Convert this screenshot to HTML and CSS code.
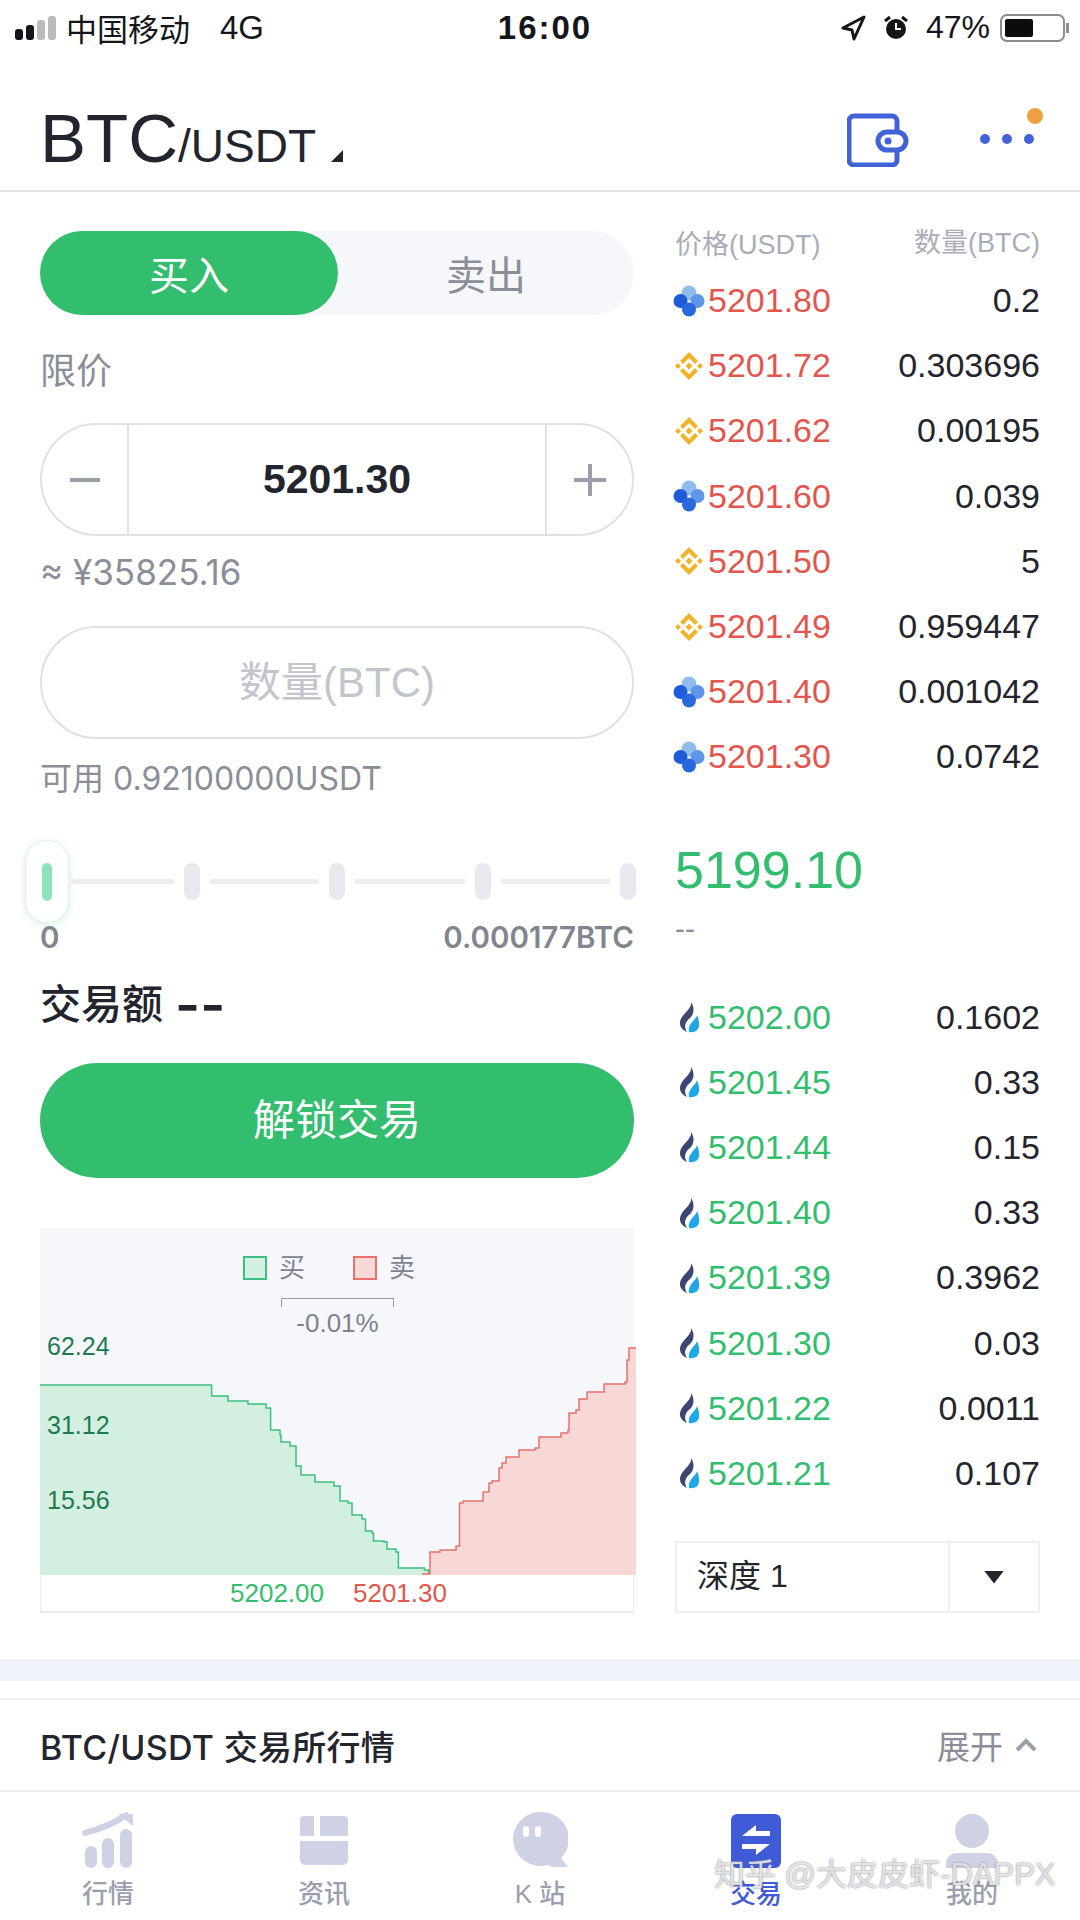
FILE: index.html
```html
<!DOCTYPE html>
<html lang="zh-CN">
<head>
    <meta charset="UTF-8">
    <meta name="viewport" content="width=device-width, initial-scale=1.0">
    <title>BTC/USDT 交易</title>
    <link rel="stylesheet" href="styles.css">
</head>
<body>
    <!-- exchange logos -->
    <svg class="defs" aria-hidden="true">
        <symbol id="ok" viewBox="0 0 32 32">
            <circle cx="16" cy="8" r="7.5" fill="#8fbbee"/>
            <circle cx="7.5" cy="16" r="7" fill="#1f5bd8"/>
            <circle cx="24.5" cy="16" r="7" fill="#5f96e8"/>
            <circle cx="16" cy="24.5" r="7" fill="#2a68de"/>
        </symbol>
        <symbol id="bn" viewBox="0 0 32 32">
            <path fill="#efb429" d="M16 2l9 9-3 3-6-6-6 6-3-3zM16 30l9-9-3-3-6 6-6-6-3 3zM16 12.500l3.500 3.500-3.500 3.500-3.500-3.500zM5 13l3 3-3 3-3-3zM27 13l3 3-3 3-3-3z"/>
        </symbol>
        <symbol id="hb" viewBox="0 0 32 32">
            <g transform="translate(2 1)">
                <path fill="#3c4673" d="M16 0C17 6 10 10 7 15C3 21 5 27 12 30C8 24 11 19 15 16C19 12 20 6 16 0Z"/>
                <path fill="#1ea7e6" d="M22 13C22 17 12 22 14 30C20 31 25 28 24 21C24 18 23 15 22 13Z"/>
            </g>
        </symbol>
    </svg>

    <div class="statusbar">
        <div class="status-left">
            <span class="signal"><i></i><i></i><i class="off"></i><i class="off"></i></span>
            <span class="carrier">中国移动</span>
            <span class="net">4G</span>
        </div>
        <div class="status-time">16:00</div>
        <div class="status-right">
            <svg width="25" height="26" viewBox="0 0 25 26"><path d="M23 2L2 13l9 2 2 9z" fill="none" stroke="#15161a" stroke-width="3" stroke-linejoin="round"/></svg>
            <svg width="26" height="26" viewBox="0 0 26 26"><circle cx="13" cy="14" r="10" fill="#15161a"/><path d="M13 8v6h5" fill="none" stroke="#fff" stroke-width="2"/><path d="M2 6l5-4M24 6l-5-4" stroke="#15161a" stroke-width="3"/></svg>
            <span class="percent">47%</span>
            <span class="battery"><i></i></span>
        </div>
    </div>

    <header class="topbar">
        <div class="pair">
            <span class="pair-base">BTC</span><span class="pair-quote">/USDT</span>
            <span class="pair-caret"></span>
        </div>
        <div class="top-actions">
            <svg width="62" height="54" viewBox="0 0 62 54">
                <path d="M50 19V8a5 5 0 0 0-5-5H7a5 5 0 0 0-5 5v39a5 5 0 0 0 5 5h38a5 5 0 0 0 5-5V37" fill="none" stroke="#4263d8" stroke-width="5"/>
                <rect x="31" y="19" width="28" height="18" rx="9" fill="#fff" stroke="#4263d8" stroke-width="5"/>
                <circle cx="41" cy="28" r="3.500" fill="#4263d8"/>
            </svg>
            <div class="more">
                <i></i><i></i><i></i>
                <span class="more-dot"></span>
            </div>
        </div>
    </header>

    <div class="trade">
        <section class="form">
            <div class="side-tabs">
                <div class="side-tab active">买入</div>
                <div class="side-tab">卖出</div>
            </div>

            <div class="order-type">限价</div>

            <div class="stepper">
                <div class="step-btn">
                    <svg width="32" height="32" viewBox="0 0 32 32"><path d="M1 16h30" stroke="#9a9ea8" stroke-width="4"/></svg>
                </div>
                <div class="step-value">5201.30</div>
                <div class="step-btn">
                    <svg width="34" height="34" viewBox="0 0 34 34"><path d="M1 17h32M17 1v32" stroke="#9a9ea8" stroke-width="4"/></svg>
                </div>
            </div>
            <div class="hint fiat">≈ ¥35825.16</div>

            <div class="amount-input">数量(BTC)</div>
            <div class="hint avail">可用 0.92100000USDT</div>

            <div class="slider">
                <div class="thumb"><i></i></div>
                <span class="line line-first"></span>
                <span class="tick"></span>
                <span class="line"></span>
                <span class="tick"></span>
                <span class="line"></span>
                <span class="tick"></span>
                <span class="line"></span>
                <span class="tick"></span>
            </div>
            <div class="slider-labels">
                <span>0</span>
                <span>0.000177BTC</span>
            </div>

            <div class="volume">交易额 <span class="volume-empty">--</span></div>
            <div class="unlock">解锁交易</div>

            <div class="depth-chart">
                <svg class="depth-svg" width="596" height="347" viewBox="0 0 596 347">
                    <path fill="#d2efe0" stroke="none" d="M0 347V157H171.600V168H188V173H208V176H226V180H230.600V202H240V207H241V214H250V218H256V238H261V247H275V254H294V258H300V273H308V275H312V287H322V291H325.500V303H332V305H333.500V313H344V314H347V321H356V324H358.400V340H384.500V342H388.500V345H410V347Z"/>
                    <path fill="none" stroke="#3cc07c" stroke-width="1.500" d="M0 157H171.600V168H188V173H208V176H226V180H230.600V202H240V207H241V214H250V218H256V238H261V247H275V254H294V258H300V273H308V275H312V287H322V291H325.500V303H332V305H333.500V313H344V314H347V321H356V324H358.400V340H384.500V342H388.500V345H410"/>
                    <path fill="#f8d8d7" stroke="none" d="M382 347V346H390V324H400V322H416V318H419.500V275H423V273H443V264H449V255H452V253H459V240H462V235H466V229H479V222H495V220H499V209H521V205H528V202H529V185H536V182H539V171H547V164H564V156H585V154H587V132H589V120H596V347Z"/>
                    <path fill="none" stroke="#e8716c" stroke-width="1.500" d="M382 346H390V324H400V322H416V318H419.500V275H423V273H443V264H449V255H452V253H459V240H462V235H466V229H479V222H495V220H499V209H521V205H528V202H529V185H536V182H539V171H547V164H564V156H585V154H587V132H589V120H596"/>
                </svg>
                <div class="legend">
                    <span class="swatch swatch-buy"></span><span>买</span>
                    <span class="swatch swatch-sell"></span><span>卖</span>
                </div>
                <div class="spread">-0.01%</div>
                <div class="y-label y-top">62.24</div>
                <div class="y-label y-mid">31.12</div>
                <div class="y-label y-low">15.56</div>
                <div class="x-labels">
                    <span class="up">5202.00</span>
                    <span class="down">5201.30</span>
                </div>
            </div>
        </section>

        <section class="book">
            <div class="book-head">
                <span class="head-price">价格(USDT)</span>
                <span>数量(BTC)</span>
            </div>

            <div class="book-row"><span class="cell"><svg class="logo"><use href="#ok"/></svg><span class="down">5201.80</span></span><span>0.2</span></div>
            <div class="book-row"><span class="cell"><svg class="logo"><use href="#bn"/></svg><span class="down">5201.72</span></span><span>0.303696</span></div>
            <div class="book-row"><span class="cell"><svg class="logo"><use href="#bn"/></svg><span class="down">5201.62</span></span><span>0.00195</span></div>
            <div class="book-row"><span class="cell"><svg class="logo"><use href="#ok"/></svg><span class="down">5201.60</span></span><span>0.039</span></div>
            <div class="book-row"><span class="cell"><svg class="logo"><use href="#bn"/></svg><span class="down">5201.50</span></span><span>5</span></div>
            <div class="book-row"><span class="cell"><svg class="logo"><use href="#bn"/></svg><span class="down">5201.49</span></span><span>0.959447</span></div>
            <div class="book-row"><span class="cell"><svg class="logo"><use href="#ok"/></svg><span class="down">5201.40</span></span><span>0.001042</span></div>
            <div class="book-row"><span class="cell"><svg class="logo"><use href="#ok"/></svg><span class="down">5201.30</span></span><span>0.0742</span></div>

            <div class="last-price">5199.10</div>
            <div class="last-fiat">--</div>

            <div class="book-row"><span class="cell"><svg class="logo"><use href="#hb"/></svg><span class="up">5202.00</span></span><span>0.1602</span></div>
            <div class="book-row"><span class="cell"><svg class="logo"><use href="#hb"/></svg><span class="up">5201.45</span></span><span>0.33</span></div>
            <div class="book-row"><span class="cell"><svg class="logo"><use href="#hb"/></svg><span class="up">5201.44</span></span><span>0.15</span></div>
            <div class="book-row"><span class="cell"><svg class="logo"><use href="#hb"/></svg><span class="up">5201.40</span></span><span>0.33</span></div>
            <div class="book-row"><span class="cell"><svg class="logo"><use href="#hb"/></svg><span class="up">5201.39</span></span><span>0.3962</span></div>
            <div class="book-row"><span class="cell"><svg class="logo"><use href="#hb"/></svg><span class="up">5201.30</span></span><span>0.03</span></div>
            <div class="book-row"><span class="cell"><svg class="logo"><use href="#hb"/></svg><span class="up">5201.22</span></span><span>0.0011</span></div>
            <div class="book-row"><span class="cell"><svg class="logo"><use href="#hb"/></svg><span class="up">5201.21</span></span><span>0.107</span></div>

            <div class="depth-select">
                <div class="depth-name">深度 1</div>
                <div class="depth-arrow"><span></span></div>
            </div>
        </section>
    </div>

    <div class="band"></div>

    <div class="market-row">
        <div class="market-title">BTC/USDT 交易所行情</div>
        <div class="market-toggle">
            展开
            <svg width="22" height="14" viewBox="0 0 22 14"><path d="M2 12l9-9 9 9" fill="none" stroke="#9a9ea8" stroke-width="4"/></svg>
        </div>
    </div>

    <nav class="tabbar">
        <div class="tab">
            <svg width="56" height="56" viewBox="0 0 56 56">
                <rect x="5" y="34" width="12" height="22" rx="6" fill="#cfd2e4"/>
                <rect x="22" y="26" width="12" height="30" rx="6" fill="#cfd2e4"/>
                <rect x="40" y="17" width="12" height="39" rx="6" fill="#cfd2e4"/>
                <path d="M5 21C20 17 34 12 46 3" fill="none" stroke="#cfd2e4" stroke-width="6" stroke-linecap="round"/>
                <path d="M38 2h15v12z" fill="#cfd2e4"/>
            </svg>
            <span>行情</span>
        </div>
        <div class="tab">
            <svg width="56" height="56" viewBox="0 0 56 56">
                <path fill="#cfd2e4" d="M8 4h10v20H4V8a4 4 0 0 1 4-4zM24 4h24a4 4 0 0 1 4 4v16H24zM4 29h48v19a5 5 0 0 1-5 5H9a5 5 0 0 1-5-5z"/>
            </svg>
            <span>资讯</span>
        </div>
        <div class="tab">
            <svg width="56" height="56" viewBox="0 0 56 56">
                <path fill="#cfd2e4" d="M28 0a27 27 0 1 0 8 52.800L40 55h16l-7-9A27 27 0 0 0 28 0z"/>
                <rect x="11" y="14" width="6" height="11" rx="3" fill="#fff"/>
                <rect x="23" y="14" width="6" height="11" rx="3" fill="#fff"/>
            </svg>
            <span>K 站</span>
        </div>
        <div class="tab active">
            <svg width="56" height="56" viewBox="0 0 56 56">
                <rect x="3" y="2" width="50" height="54" rx="6" fill="#3f5bd8"/>
                <path fill="#fff" d="M28 13v6h14v5H14zM28 43v-6H14v-5h28z"/>
            </svg>
            <span>交易</span>
        </div>
        <div class="tab">
            <svg width="56" height="56" viewBox="0 0 56 56">
                <ellipse cx="28" cy="19" rx="17" ry="17" fill="#cfd2e4"/>
                <path fill="#cfd2e4" d="M2 56V52a11 11 0 0 1 11-11h30a11 11 0 0 1 11 11v4z"/>
            </svg>
            <span>我的</span>
        </div>
    </nav>

    <div class="watermark">知乎 @大皮皮虾-DAPPX</div>
</body>
</html>
```

FILE: styles.css
```css
:root {
    --green: #33bd6e;
    --red: #e2564d;
    --blue: #3f5bd8;
    --text: #23252e;
    --gray: #8a8e99;
    --light-gray: #a9adb9;
    --border: #dfe1e6;
    --panel: #f6f7fb;
}

* {
    margin: 0;
    padding: 0;
    box-sizing: border-box;
}

body {
    position: relative;
    width: 1080px;
    height: 1920px;
    overflow: hidden;
    background-color: #ffffff;
    color: var(--text);
    font-family: "Liberation Sans", "Noto Sans CJK SC", sans-serif;
}

.defs {
    position: absolute;
    width: 0;
    height: 0;
}

/* status bar */
.statusbar {
    display: flex;
    align-items: center;
    justify-content: space-between;
    height: 55px;
    padding: 0 15px 0 15px;
    color: #15161a;
}

.status-left {
    display: flex;
    align-items: center;
    width: 410px;
    font-size: 31px;
}

.signal {
    display: flex;
    align-items: flex-end;
    gap: 3px;
    height: 24px;
    margin-right: 10px;
}

.signal i {
    width: 8px;
    background-color: #15161a;
    border-radius: 3px;
}

.signal i:nth-child(1) { height: 11px; }
.signal i:nth-child(2) { height: 15px; }
.signal i:nth-child(3) { height: 20px; }
.signal i:nth-child(4) { height: 24px; }

.signal i.off {
    background-color: #b9bbbf;
}

.net {
    margin-left: 30px;
    font-size: 33px;
}

.status-time {
    font-size: 33px;
    font-weight: bold;
    letter-spacing: 2px;
}

.status-right {
    display: flex;
    align-items: center;
    justify-content: flex-end;
    width: 400px;
    gap: 17px;
}

.percent {
    font-size: 32px;
    margin-right: -7px;
}

.battery {
    position: relative;
    width: 65px;
    height: 28px;
    padding: 3px;
    border: 2px solid #8b8d91;
    border-radius: 7px;
}

.battery::after {
    content: "";
    position: absolute;
    right: -6px;
    top: 7px;
    width: 3px;
    height: 10px;
    background-color: #8b8d91;
}

.battery i {
    display: block;
    width: 28px;
    height: 100%;
    background-color: #0c0c0e;
    border-radius: 2px;
}

/* header */
.topbar {
    display: flex;
    align-items: flex-start;
    justify-content: space-between;
    height: 137px;
    padding: 0 40px;
    border-bottom: 2px solid #e4e5e8;
}

.pair {
    display: flex;
    align-items: baseline;
    padding-top: 46px;
    line-height: 76px;
}

.pair-base {
    font-size: 69px;
}

.pair-quote {
    font-size: 46px;
}

.pair-caret {
    width: 12px;
    height: 12px;
    margin-left: 15px;
    background-color: var(--text);
    clip-path: polygon(100% 0, 100% 100%, 0 100%);
}

.top-actions {
    display: flex;
    align-items: flex-start;
    padding-top: 58px;
}

.more {
    position: relative;
    display: flex;
    gap: 12px;
    margin-left: 71px;
    margin-right: 6px;
    padding-top: 21px;
}

.more i {
    width: 10px;
    height: 10px;
    background-color: #4263d8;
    border-radius: 50%;
}

.more-dot {
    position: absolute;
    right: -9px;
    top: -5px;
    width: 16px;
    height: 16px;
    background-color: #f0a040;
    border-radius: 50%;
}

/* main two columns */
.trade {
    display: grid;
    grid-template-columns: 594px 365px;
    gap: 41px;
    padding: 39px 40px 0;
}

.side-tabs {
    display: flex;
    height: 84px;
    background-color: var(--panel);
    border-radius: 42px;
}

.side-tab {
    display: flex;
    align-items: center;
    justify-content: center;
    flex: 1;
    color: var(--gray);
    font-size: 40px;
}

.side-tab.active {
    flex: 0 0 298px;
    background-color: var(--green);
    color: #ffffff;
    border-radius: 42px;
}

.order-type {
    margin-top: 35px;
    color: var(--gray);
    font-size: 36px;
    line-height: 44px;
}

.stepper {
    display: flex;
    height: 113px;
    margin-top: 29px;
    border: 2px solid var(--border);
    border-radius: 57px;
}

.step-btn {
    display: flex;
    align-items: center;
    justify-content: center;
    flex: 0 0 85px;
}

.step-value {
    flex: 1;
    border-left: 2px solid var(--border);
    border-right: 2px solid var(--border);
    font-size: 41px;
    font-weight: bold;
    line-height: 109px;
    text-align: center;
}

.hint {
    height: 40px;
    margin-top: 16px;
    color: var(--gray);
    font-family: Inter, "Noto Sans CJK SC", sans-serif;
    font-size: 32px;
    line-height: 40px;
}

.fiat {
    font-size: 35px;
}

.amount-input {
    height: 113px;
    margin-top: 34px;
    border: 2px solid var(--border);
    border-radius: 57px;
    color: #c3c5cd;
    font-size: 42px;
    line-height: 109px;
    text-align: center;
}

.avail {
    margin-top: 20px;
}

.slider {
    display: flex;
    align-items: center;
    height: 83px;
    margin: 41px -2px 0 -15px;
}

.thumb {
    display: flex;
    align-items: center;
    justify-content: center;
    flex: 0 0 44px;
    height: 83px;
    background-color: #ffffff;
    border: 1px solid #e3efe9;
    border-radius: 22px;
    box-shadow: 0 2px 8px rgba(51, 189, 110, 0.2);
}

.thumb i {
    width: 10px;
    height: 38px;
    background-color: #8fe3b8;
    border-radius: 5px;
}

.line {
    flex: 1;
    height: 5px;
    margin: 0 10px;
    background-color: #ecedf0;
}

.line-first {
    flex: 0 0 103px;
    margin: 0 10px 0 2px;
}

.tick {
    flex: 0 0 16px;
    height: 37px;
    background-color: #e8e9ee;
    border-radius: 8px;
}

.slider-labels {
    display: flex;
    justify-content: space-between;
    margin-top: -3px;
    color: #808590;
    font-family: Inter, "Noto Sans CJK SC", sans-serif;
    font-size: 29.500px;
    font-weight: 600;
    line-height: 34px;
}

.volume {
    display: flex;
    align-items: center;
    gap: 12px;
    height: 50px;
    margin-top: 26px;
    font-size: 41px;
    font-weight: 500;
    line-height: 50px;
}

.volume-empty {
    font-family: Inter, sans-serif;
    font-size: 54px;
    font-weight: 600;
}

.unlock {
    height: 115px;
    margin-top: 33px;
    background-color: var(--green);
    border-radius: 58px;
    color: #ffffff;
    font-size: 42px;
    line-height: 115px;
    text-align: center;
}

/* depth chart */
.depth-chart {
    position: relative;
    height: 385px;
    margin-top: 50px;
    background-color: var(--panel);
    border-bottom: 2px solid #e8e9ed;
    font-size: 26px;
}

.depth-svg {
    display: block;
}

.legend {
    position: absolute;
    left: 203px;
    top: 27px;
    display: flex;
    align-items: center;
    color: #7d8290;
    line-height: 26px;
}

.swatch {
    width: 24px;
    height: 24px;
    margin-right: 12px;
    border: 2px solid;
}

.swatch-buy {
    background-color: #d2efe0;
    border-color: #3cc07c;
}

.swatch-sell {
    margin-left: 48px;
    background-color: #f8d8d7;
    border-color: #e8716c;
}

.spread {
    position: absolute;
    left: 241px;
    top: 70px;
    width: 113px;
    padding-top: 9px;
    color: #7d8290;
    line-height: 32px;
    text-align: center;
}

.spread::before {
    content: "";
    position: absolute;
    left: 0;
    right: 0;
    top: 0;
    height: 8px;
    border: 1px solid #9a9ea8;
    border-bottom: none;
}

.y-label {
    position: absolute;
    left: 7px;
    color: #1f7a4f;
    font-size: 25px;
    line-height: 30px;
}

.y-top { top: 103px; }
.y-mid { top: 182px; }
.y-low { top: 257px; }

.x-labels {
    position: absolute;
    left: 0;
    right: 0;
    top: 347px;
    bottom: 0;
    display: flex;
    justify-content: flex-start;
    gap: 29px;
    padding-left: 189px;
    background-color: #ffffff;
    border-left: 1px solid #eceded;
    border-right: 1px solid #eceded;
    line-height: 36px;
}

.up {
    color: var(--green);
}

.down {
    color: var(--red);
}

/* order book */
.book-head {
    display: flex;
    justify-content: space-between;
    margin-top: -3px;
    margin-bottom: 10px;
    color: var(--light-gray);
    font-size: 27px;
    line-height: 30px;
}

.head-price {
    position: relative;
    top: 2px;
}

.book-row {
    display: flex;
    align-items: center;
    justify-content: space-between;
    height: 65.2px;
    font-size: 34px;
}

.cell {
    display: flex;
    align-items: center;
    gap: 3px;
}

.logo {
    width: 32px;
    height: 32px;
    margin-left: -2px;
}

.last-price {
    margin-top: 50px;
    color: var(--green);
    font-size: 52px;
    line-height: 60px;
}

.last-fiat {
    margin-top: 14px;
    margin-bottom: 41px;
    color: var(--gray);
    font-size: 30px;
    line-height: 30px;
}

.depth-select {
    display: flex;
    height: 72px;
    margin-top: 35px;
    border: 2px solid #eeeff1;
}

.depth-name {
    flex: 1;
    padding-left: 20px;
    font-size: 32px;
    line-height: 66px;
}

.depth-arrow {
    display: flex;
    align-items: center;
    justify-content: center;
    flex: 0 0 90px;
    border-left: 2px solid #eeeff1;
}

.depth-arrow span {
    width: 20px;
    height: 13px;
    background-color: var(--text);
    clip-path: polygon(0 0, 100% 0, 50% 100%);
}

/* market row */
.band {
    height: 22px;
    margin-top: 46px;
    background-color: #f1f3fb;
}

.market-row {
    display: flex;
    align-items: center;
    justify-content: space-between;
    height: 94px;
    margin-top: 17px;
    padding: 0 43px 0 40px;
    border-top: 2px solid #eeeff1;
    border-bottom: 2px solid #eeeff1;
}

.market-title {
    font-family: Inter, "Noto Sans CJK SC", sans-serif;
    font-size: 34px;
    font-weight: 500;
    letter-spacing: 0.3px;
}

.market-toggle {
    display: flex;
    align-items: center;
    gap: 12px;
    color: var(--gray);
    font-size: 33px;
}

/* bottom tabs */
.tabbar {
    display: flex;
    padding-top: 20px;
}

.tab {
    display: flex;
    align-items: center;
    flex-direction: column;
    flex: 1;
    gap: 9px;
    color: #9a9eae;
    font-size: 26px;
    font-weight: 500;
    line-height: 34px;
}

.tab.active {
    color: var(--blue);
}

.watermark {
    position: absolute;
    left: 714px;
    top: 1856px;
    color: rgba(255, 255, 255, 0.75);
    font-size: 31px;
    line-height: 38px;
    white-space: nowrap;
    text-shadow: 0 0 2px #6e7078;
}
```
